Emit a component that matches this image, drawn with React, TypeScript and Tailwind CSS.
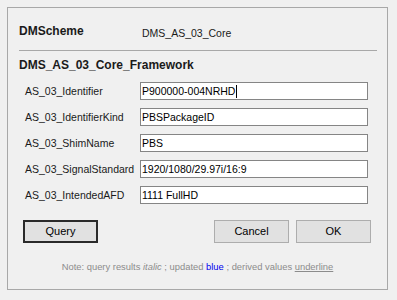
import React from 'react';

const fields = [
  { label: 'AS_03_Identifier', value: 'P900000-004NRHD', focused: true },
  { label: 'AS_03_IdentifierKind', value: 'PBSPackageID' },
  { label: 'AS_03_ShimName', value: 'PBS' },
  { label: 'AS_03_SignalStandard', value: '1920/1080/29.97i/16:9' },
  { label: 'AS_03_IntendedAFD', value: '1111 FullHD' },
];

export default function App() {
  return (
    <div
      className="w-[397px] h-[300px] bg-[#f0f0f0] p-[7px] text-[#1a1a1a]"
      style={{ fontFamily: '"Liberation Sans", Arial, sans-serif' }}
    >
      <div className="w-[381px] h-[283px] border border-[#a8a8a8] flex flex-col">
        {/* Scheme header */}
        <div className="flex items-start pl-[11px] pt-[15px]">
          <div className="w-[123px] text-[12px] leading-[16px] font-bold">DMScheme</div>
          <div className="mt-[2px] text-[10.5px] leading-[16px]">DMS_AS_03_Core</div>
        </div>
        <div className="ml-[11px] mr-[10px] mt-[9px] h-px bg-[#a8a8a8]" />

        <div className="pl-[11px] mt-[6px] text-[12px] leading-[16px] font-bold">DMS_AS_03_Core_Framework</div>

        {/* Fields */}
        <div className="flex flex-col gap-2 mt-[9px] pl-[17px]">
          {fields.map((f) => (
            <div key={f.label} className="flex items-center h-[18px]">
              <div className="w-[115px] text-[10.5px] leading-[14px] whitespace-nowrap">{f.label}</div>
              <div className="w-[228px] h-[18px] bg-white border border-[#858585] flex items-center pl-[1px] text-[10.5px] leading-[14px] text-black">
                <span>{f.value}</span>
                {f.focused && <span className="ml-px w-px h-[13px] bg-black" />}
              </div>
            </div>
          ))}
        </div>

        {/* Buttons */}
        <div className="flex items-center mt-[16px] pl-[15px] pr-[16px]">
          <button className="w-[75px] h-[23px] border-2 border-[#2a2a2a] bg-[#e1e1e1] text-[11px] text-black">
            Query
          </button>
          <div className="flex-1" />
          <button className="w-[75px] h-[23px] border border-[#adadad] bg-[#e1e1e1] text-[11px] text-black">
            Cancel
          </button>
          <button className="ml-[7px] w-[75px] h-[23px] border border-[#adadad] bg-[#e1e1e1] text-[11px] text-black">
            OK
          </button>
        </div>

        {/* Legend */}
        <p className="mt-[18px] text-center text-[9.4px] leading-[12px] text-[#8c8c8c]">
          Note: query results <span className="italic">italic</span> ; updated{' '}
          <span className="text-[#0000ee]">blue</span> ; derived values{' '}
          <span className="underline">underline</span>
        </p>
      </div>
    </div>
  );
}
